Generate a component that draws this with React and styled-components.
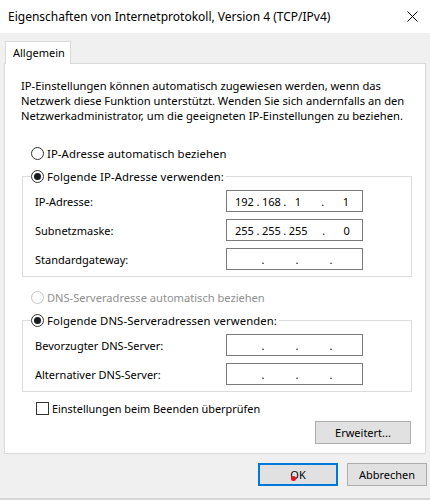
import React from "react";
import styled, { createGlobalStyle } from "styled-components";

const GlobalStyle = createGlobalStyle`
  html, body {
    margin: 0;
    padding: 0;
    background: #ffffff;
  }
  * {
    box-sizing: border-box;
  }
`;

const segoe = `"Noto Sans", "Open Sans", sans-serif`;
const tahoma = `"Noto Sans", "DejaVu Sans", sans-serif`;

const IpBox = ({ value }) => {
  const parts = value ? value.split(".") : null;
  if (!parts) {
    return (
      <IpFrame empty>
        <Octet empty />
        <IpDot>.</IpDot>
        <Octet empty />
        <IpDot>.</IpDot>
        <Octet empty />
        <IpDot>.</IpDot>
        <Octet empty />
      </IpFrame>
    );
  }
  return (
    <IpFrame>
      <Octet>{parts[0]}</Octet>
      <IpDot>.</IpDot>
      <Octet>{parts[1]}</Octet>
      <IpDot>.</IpDot>
      <Octet>{parts[2]}</Octet>
      <IpDot last>.</IpDot>
      <Octet last>{parts[3]}</Octet>
    </IpFrame>
  );
};

const Radio = ({ checked, disabled, tahomaFont, children }) => (
  <RadioRow disabled={disabled} $tahoma={tahomaFont}>
    <RadioCircle disabled={disabled}>{checked && <RadioDot />}</RadioCircle>
    <span>{children}</span>
  </RadioRow>
);

const App = () => {
  return (
    <>
      <GlobalStyle />
      <Window>
        <TitleBar>
          <Title>Eigenschaften von Internetprotokoll, Version 4 (TCP/IPv4)</Title>
          <CloseBtn>
            <svg width="11" height="11" viewBox="0 0 11 11">
              <path d="M0.5 0.5 L10.5 10.5 M10.5 0.5 L0.5 10.5" stroke="#000" strokeWidth="1" fill="none" />
            </svg>
          </CloseBtn>
        </TitleBar>

        <Body>
          <Tabs>
            <Tab>Allgemein</Tab>
          </Tabs>
          <Panel>
            <Intro>
              IP-Einstellungen können automatisch zugewiesen werden, wenn das
              <br />
              Netzwerk diese Funktion unterstützt. Wenden Sie sich andernfalls an den
              <br />
              Netzwerkadministrator, um die geeigneten IP-Einstellungen zu beziehen.
            </Intro>

            <OptionLine>
              <Radio tahomaFont>IP-Adresse automatisch beziehen</Radio>
            </OptionLine>

            <Group>
              <Legend>
                <Radio checked tahomaFont>Folgende IP-Adresse verwenden:</Radio>
              </Legend>
              <Field>
                <FieldLabel>IP-Adresse:</FieldLabel>
                <IpBox value="192.168.1.1" />
              </Field>
              <Field>
                <FieldLabel>Subnetzmaske:</FieldLabel>
                <IpBox value="255.255.255.0" />
              </Field>
              <Field>
                <FieldLabel>Standardgateway:</FieldLabel>
                <IpBox />
              </Field>
            </Group>

            <OptionLine spaced>
              <Radio disabled>DNS-Serveradresse automatisch beziehen</Radio>
            </OptionLine>

            <Group>
              <Legend>
                <Radio checked tahomaFont>Folgende DNS-Serveradressen verwenden:</Radio>
              </Legend>
              <Field>
                <FieldLabel>Bevorzugter DNS-Server:</FieldLabel>
                <IpBox />
              </Field>
              <Field>
                <FieldLabel>Alternativer DNS-Server:</FieldLabel>
                <IpBox />
              </Field>
            </Group>

            <CheckRow>
              <CheckBox />
              <span>Einstellungen beim Beenden überprüfen</span>
            </CheckRow>

            <PanelActions>
              <Button wide>Erweitert...</Button>
            </PanelActions>
          </Panel>

          <Footer>
            <Button primary>
              <Cursor />
              OK
            </Button>
            <Button>Abbrechen</Button>
          </Footer>
        </Body>
      </Window>
    </>
  );
};

export default App;

const Window = styled.div`
  width: 430px;
  height: 500px;
  background: #f0f0f0;
  display: flex;
  flex-direction: column;
  font-family: ${segoe};
  font-size: 11px;
  color: #000;
  overflow: hidden;
`;

const TitleBar = styled.div`
  height: 33px;
  background: #ffffff;
  display: flex;
  align-items: center;
  justify-content: space-between;
  padding: 0 12px 0 8px;
`;

const Title = styled.div`
  font-size: 12px;
  white-space: nowrap;
  padding-bottom: 1px;
`;

const CloseBtn = styled.div`
  display: flex;
  align-items: center;
  justify-content: center;
  width: 11px;
  height: 11px;
`;

const Body = styled.div`
  flex: 1;
  padding: 8px 4px 0 4px;
  display: flex;
  flex-direction: column;
  border-bottom: 2px solid #d6d6d6;
`;

const Tabs = styled.div`
  display: flex;
  padding-left: 1px;
`;

const Tab = styled.div`
  position: relative;
  z-index: 1;
  width: 66px;
  height: 23px;
  margin-bottom: -1px;
  background: #ffffff;
  border: 1px solid #d9d9d9;
  border-bottom: none;
  padding: 3px 0 0 7px;
  font-size: 11px;
`;

const Panel = styled.div`
  background: #ffffff;
  border: 1px solid #d9d9d9;
  padding: 14px 13px 9px 16px;
  display: flex;
  flex-direction: column;
`;

const Intro = styled.div`
  line-height: 15px;
  white-space: nowrap;
  font-size: 11.2px;
`;

const OptionLine = styled.div`
  margin-top: ${(p) => (p.spaced ? "12px" : "22px")};
  padding-left: 10px;
`;

const RadioRow = styled.label`
  display: flex;
  align-items: center;
  gap: 3px;
  height: 16px;
  white-space: nowrap;
  font-family: ${(p) => (p.$tahoma ? tahoma : segoe)};
  font-size: ${(p) => (p.$tahoma ? "11.3px" : "11.1px")};
  letter-spacing: ${(p) => (p.$tahoma ? "0.1px" : "0")};
  color: ${(p) => (p.disabled ? "#8f8f8f" : "#000")};
`;

const RadioCircle = styled.span`
  width: 13px;
  height: 13px;
  border-radius: 50%;
  border: 1px solid ${(p) => (p.disabled ? "#c4c4c4" : "#333333")};
  background: #fff;
  display: flex;
  align-items: center;
  justify-content: center;
  flex-shrink: 0;
`;

const RadioDot = styled.span`
  width: 7px;
  height: 7px;
  border-radius: 50%;
  background: #1b1b1b;
`;

const Group = styled.fieldset`
  margin: 7px 0 0 1px;
  border: 1px solid #dcdcdc;
  padding: 6px 0 6px 12px;
  display: flex;
  flex-direction: column;
  gap: 7px;
  min-width: 0;
`;

const Legend = styled.legend`
  padding: 0 2px 0 0;
  margin-left: -4px;
`;

const Field = styled.div`
  display: grid;
  grid-template-columns: 191px 137px;
  align-items: center;
  height: 22px;
`;

const FieldLabel = styled.span`
  white-space: nowrap;
  font-size: 11px;
`;

const IpFrame = styled.div`
  height: 22px;
  border: 1px solid #7a7a7a;
  background: #fff;
  display: flex;
  align-items: center;
  padding-left: ${(p) => (p.empty ? "6px" : "8px")};
  font-size: 11px;
`;

const Octet = styled.span`
  min-width: ${(p) => (p.empty ? "26px" : "18px")};
  margin-left: ${(p) => (p.last ? "10px" : "0")};
  text-align: center;
`;

const IpDot = styled.span`
  width: ${(p) => (p.empty ? "7px" : "8px")};
  margin-left: ${(p) => (p.last ? "12px" : "0")};
  text-align: center;
`;

const CheckRow = styled.label`
  display: flex;
  align-items: center;
  gap: 3px;
  height: 16px;
  margin: 8px 0 0 15px;
  white-space: nowrap;
  font-size: 10.9px;
`;

const CheckBox = styled.span`
  width: 13px;
  height: 13px;
  border: 1px solid #333333;
  background: #fff;
  flex-shrink: 0;
`;

const PanelActions = styled.div`
  display: flex;
  justify-content: flex-end;
  margin: 5px 1px 0 0;
`;

const Button = styled.div`
  position: relative;
  width: ${(p) => (p.wide ? "96px" : "80px")};
  height: 23px;
  background: #e1e1e1;
  border: ${(p) => (p.primary ? "2px solid #0078d7" : "1px solid #adadad")};
  display: flex;
  align-items: center;
  justify-content: center;
  font-size: 11px;
  white-space: nowrap;
`;

const Cursor = styled.span`
  position: absolute;
  left: 31px;
  top: 11px;
  width: 5px;
  height: 5px;
  border-radius: 50%;
  background: #e81123;
`;

const Footer = styled.div`
  display: flex;
  justify-content: flex-end;
  gap: 9px;
  padding: 9px 0 0 0;
  margin-right: -1px;
`;
